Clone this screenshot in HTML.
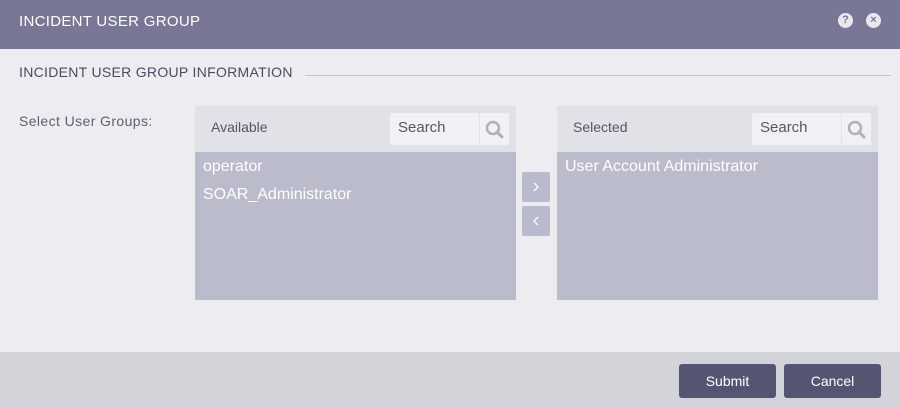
<!DOCTYPE html>
<html><head><style>
*{margin:0;padding:0;box-sizing:border-box}
body{width:900px;height:408px;background:#ededf1;font-family:"Liberation Sans",sans-serif;position:relative;overflow:hidden}
.hdr{position:absolute;left:0;top:0;width:900px;height:49px;background:#787896;color:#fff;font-size:15px;line-height:44px;padding-left:19px;letter-spacing:.3px}
.ic{position:absolute;top:13px;width:15px;height:15px;border-radius:50%;background:#e8e8ef;color:#787896;font-size:11px;font-weight:bold;text-align:center;line-height:15px}
.sec{position:absolute;left:19px;top:64px;font-size:14px;color:#4a4a62;letter-spacing:.3px}
.line{position:absolute;left:305px;top:75px;width:586px;height:1px;background:#c4c4cf}
.lbl{position:absolute;left:19px;top:113px;font-size:14px;color:#5d5d72;letter-spacing:.4px}
.pan{position:absolute;top:106px;height:194px;width:321px;background:#babbcb}
.ph{height:46px;background:#e1e1e8;position:relative}
.ph span{position:absolute;left:16px;top:13px;font-size:14px;color:#55556a}
.srch{position:absolute;right:7px;top:7px;width:119px;height:32px;background:#f1f1f5;border-radius:2px}
.srch span{position:absolute;left:8px;top:6px;font-size:15px;color:#55556a}
.srch i{position:absolute;left:89px;top:0;width:1px;height:32px;background:#e1e1e8}
.srch svg{position:absolute;left:95px;top:7px}
.it{color:#fff;font-size:16px;padding-left:8px;height:28px;line-height:26px}
.arr{position:absolute;left:522px;width:28px;height:30px;background:#b9bacb;border-radius:2px}
.arr svg{position:absolute;left:9px;top:10px}
.ftr{position:absolute;left:0;top:352px;width:900px;height:56px;background:#d3d3da}
.btn{position:absolute;top:364px;width:97px;height:34px;background:#535573;border-radius:3px;color:#fff;font-size:14px;text-align:center;line-height:34px}
</style></head><body>
<div class="hdr">INCIDENT USER GROUP</div>
<div class="ic" style="left:838px">?</div>
<div class="ic" style="left:866px">×</div>
<div class="sec">INCIDENT USER GROUP INFORMATION</div>
<div class="line"></div>
<div class="lbl">Select User Groups:</div>
<div class="pan" style="left:195px"><div class="ph"><span>Available</span><div class="srch"><span>Search</span><i></i><svg width="20" height="20" viewBox="0 0 20 20"><circle cx="8" cy="8" r="6" fill="none" stroke="#b0b0bb" stroke-width="2.5"/><path d="M12 12l5 5" stroke="#b0b0bb" stroke-width="3" stroke-linecap="round"/></svg></div></div>
<div style="padding-top:2px"><div class="it">operator</div><div class="it">SOAR_Administrator</div></div></div>
<div class="arr" style="top:172px"><svg width="10" height="10" viewBox="0 0 10 10"><path d="M3 1l4 4-4 4" fill="none" stroke="#fff" stroke-width="1.3"/></svg></div>
<div class="arr" style="top:206px"><svg width="10" height="10" viewBox="0 0 10 10"><path d="M7 1L3 5l4 4" fill="none" stroke="#fff" stroke-width="1.3"/></svg></div>
<div class="pan" style="left:557px"><div class="ph"><span>Selected</span><div class="srch"><span>Search</span><i></i><svg width="20" height="20" viewBox="0 0 20 20"><circle cx="8" cy="8" r="6" fill="none" stroke="#b0b0bb" stroke-width="2.5"/><path d="M12 12l5 5" stroke="#b0b0bb" stroke-width="3" stroke-linecap="round"/></svg></div></div>
<div style="padding-top:2px"><div class="it">User Account Administrator</div></div></div>
<div class="ftr"></div>
<div class="btn" style="left:679px">Submit</div>
<div class="btn" style="left:784px">Cancel</div>
</body></html>
